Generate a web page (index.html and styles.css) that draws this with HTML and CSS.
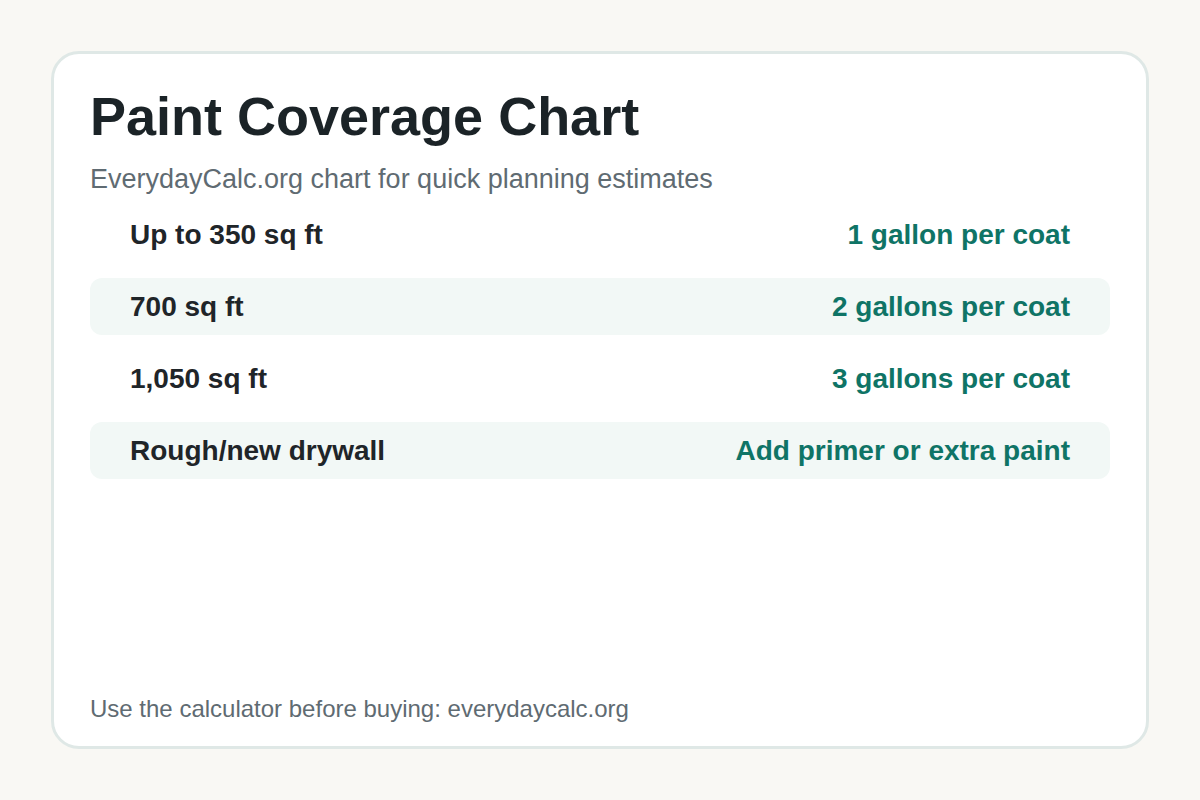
FILE: index.html
```html
<!DOCTYPE html>
<html lang="en">
<head>
<meta charset="utf-8">
<title>Paint Coverage Chart</title>
<link rel="stylesheet" href="styles.css">
</head>
<body>
<main class="card">
  <h1 class="title">Paint Coverage Chart</h1>
  <p class="subtitle">EverydayCalc.org chart for quick planning estimates</p>
  <div class="rows">
    <div class="row"><span class="label">Up to 350 sq ft</span><span class="value">1 gallon per coat</span></div>
    <div class="row alt"><span class="label">700 sq ft</span><span class="value">2 gallons per coat</span></div>
    <div class="row"><span class="label">1,050 sq ft</span><span class="value">3 gallons per coat</span></div>
    <div class="row alt"><span class="label">Rough/new drywall</span><span class="value">Add primer or extra paint</span></div>
  </div>
  <p class="footer">Use the calculator before buying: everydaycalc.org</p>
</main>
</body>
</html>
```
FILE: styles.css
```css
html, body {
  margin: 0;
  padding: 0;
}
body {
  width: 1200px;
  height: 800px;
  background: #f9f8f4;
  font-family: "Liberation Sans", Arial, sans-serif;
  padding: 51px;
  box-sizing: border-box;
}
.card {
  box-sizing: border-box;
  height: 698px;
  background: #ffffff;
  border: 3px solid #dfe8e6;
  border-radius: 28px;
  padding: 32px 36px 23px 36px;
  display: flex;
  flex-direction: column;
}
.title {
  margin: 0;
  font-size: 54px;
  line-height: 60px;
  font-weight: 700;
  color: #1b2327;
}
.subtitle {
  margin: 17px 0 0 0;
  font-size: 27px;
  line-height: 32px;
  color: #5f6b72;
}
.rows {
  display: flex;
  flex-direction: column;
  gap: 15px;
  margin-top: 11px;
}
.row {
  display: flex;
  justify-content: space-between;
  align-items: center;
  height: 57px;
  padding: 0 40px;
  border-radius: 12px;
  font-size: 28px;
  font-weight: 700;
}
.row.alt {
  background: #f2f8f6;
}
.label {
  color: #1f2529;
}
.value {
  color: #0f7466;
}
.footer {
  margin: auto 0 0 0;
  font-size: 24px;
  line-height: 28px;
  color: #5f6b72;
}
```
